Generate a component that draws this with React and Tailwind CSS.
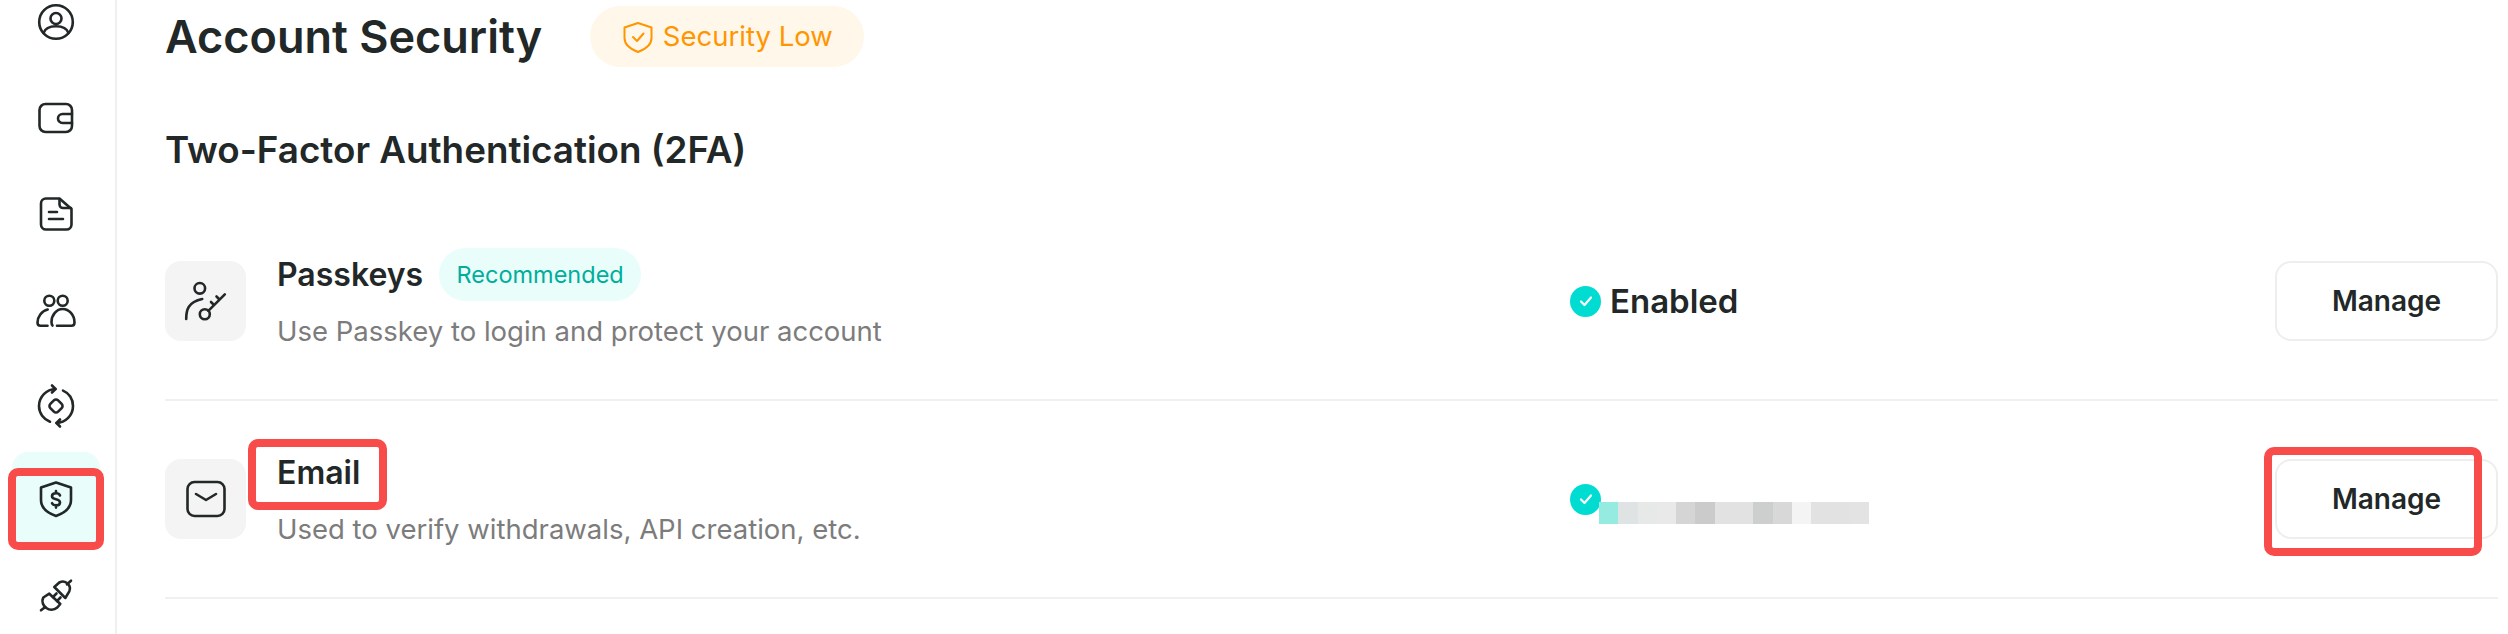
import React from 'react';

const Ico = ({ children, size = 40, sw = 2.6 }) => (
  <svg className="overflow-visible" width={size} height={size} viewBox={`0 0 ${size} ${size}`} fill="none" stroke="currentColor" strokeWidth={sw} strokeLinecap="round" strokeLinejoin="round">
    {children}
  </svg>
);

const UserIcon = () => (
  <Ico>
    <circle cx="20" cy="20" r="16.8" />
    <circle cx="20" cy="16.5" r="5.5" />
    <path d="M7.5 31c1.5-4.5 6.5-6.8 12.5-6.8S31 26.5 32.5 31" />
  </Ico>
);
const WalletIcon = () => (
  <Ico>
    <path d="M9.5 6H30a6 6 0 0 1 6 6v16a6 6 0 0 1-6 6H9.5a6 6 0 0 1-6-6V12a6 6 0 0 1 6-6z" />
    <path d="M36 16h-9.5a4.5 4.5 0 0 0 0 9H36" />
  </Ico>
);
const FileIcon = () => (
  <Ico>
    <path d="M10 4.5h13.5L35.5 15v15.5a5 5 0 0 1-5 5H10a5 5 0 0 1-5-5v-21a5 5 0 0 1 5-5z" />
    <path d="M23.5 5v5.5a3.5 3.5 0 0 0 3.5 3.5h8" />
    <path d="M13 18h8M13 25h14" />
  </Ico>
);
const UsersIcon = () => (
  <Ico>
    <circle cx="13.3" cy="10.7" r="5" />
    <circle cx="26.7" cy="10.7" r="5" />
    <path d="M11.7 19.5C5.5 21 1.5 27 1.5 32.5c0 2 1 3.2 3 3.2h7" />
    <path d="M21 35.7h14.5c2 0 3-1.2 3-3.2C38.500 25 33 19 26.7 19c-6.200 0-11.200 6-11.200 13 0 1.500.3 2.700 1 3.500" />
  </Ico>
);
const SyncIcon = () => (
  <Ico>
    <path d="M14 35.7C7.7 33.3 3 27.2 3 20 3 10.7 10.5 3.2 19.500 3" />
    <path d="M16 -.5l3.500 3.500-3.500 3.500" />
    <path d="M27 4.600C33 7 37 13 37 20c0 9.300-7.500 16.800-16.500 17" />
    <path d="M24 33.500l-3.500 3.500 3.500 3.500" />
    <rect x="14.5" y="14.5" width="11" height="11" rx="3" transform="rotate(45 20 20)" />
  </Ico>
);
const ShieldDollar = () => (
  <Ico>
    <path d="M20 3.500 35 8.500v12.500c0 8-6.500 13-15 16-8.500-3-15-8-15-16V8.500z" />
    <path d="M24 16.500c-.5-1.400-2-2.200-4-2.200-2.300 0-4 1.100-4 2.900s1.600 2.500 4 3c2.400.6 4 1.400 4 3.200s-1.700 2.900-4 2.900c-2 0-3.500-.8-4-2.200M20 12v2.300M20 26.300v2.300" />
  </Ico>
);
const PlugIcon = () => (
  <Ico>
    <path d="M5 35.300l4.300-3.300" />
    <path d="M35 5.700l-4 3.600" />
    <path d="M13.300 18.700 24.300 29l-3 3.500c-3.500 3-8 2.600-11 .500s-5.200-6.500-3-10.500z" />
    <path d="M18.300 12l5-4.500c3-1.500 6.500-.8 8.400 1.200 2 2 2.800 5 1.600 7.600L29.300 23z" />
    <path d="M17 22l3.500-3.500M21 26l3.500-3.500" />
  </Ico>
);
const PasskeyIcon = () => (
  <Ico size={44}>
    <circle cx="15.800" cy="9.300" r="5.300" />
    <path d="M2.200 40c0-9 1.800-17 16-20" />
    <circle cx="20.800" cy="35.300" r="5" />
    <path d="M24.300 31.800 40.800 15.300M30 26l-3-3M35.500 20.500l-3-3" />
  </Ico>
);
const MailIcon = () => (
  <Ico size={44}>
    <rect x="3.500" y="5" width="37" height="34" rx="7" />
    <path d="M12 17l10 6 10-6" />
  </Ico>
);

const CheckBadge = () => (
  <span className="flex h-[31px] w-[31px] shrink-0 items-center justify-center rounded-full bg-[#00dcd2]">
    <svg width="16" height="16" viewBox="0 0 16 16" fill="none" stroke="white" strokeWidth="2.2" strokeLinecap="round" strokeLinejoin="round">
      <path d="M3 8.500l3.500 3.500 6.500-7.500" />
    </svg>
  </span>
);

const blurCells = ['bg-[#96ebe1]', 'bg-[#e0e3e3]', 'bg-[#e7e8e8]', 'bg-[#e9e9e9]', 'bg-[#d5d5d5]', 'bg-[#cbcbcb]', 'bg-[#e2e2e2]', 'bg-[#e2e2e2]', 'bg-[#cdcfce]', 'bg-[#d8d8d8]', 'bg-[#f4f4f4]', 'bg-[#e2e2e2]', 'bg-[#e2e2e2]', 'bg-[#e3e3e3]'];

const RedBox = ({ className }) => (
  <span className={`pointer-events-none absolute rounded-[10px] border-[8px] border-[#f84c4a] ${className}`} />
);

const ManageButton = ({ marked }) => (
  <div className="relative shrink-0">
    <button className="h-[80px] w-[223px] rounded-[16px] border-2 border-[#eeeeee] bg-white text-[28px] font-semibold text-[#222727]">
      Manage
    </button>
    {marked && <RedBox className="-left-[11px] -top-[12px] h-[109px] w-[218px]" />}
  </div>
);

const Row = ({ icon, title, badge, desc, status, marked }) => (
  <div className="flex h-[198px] items-center border-b-2 border-[#f0f0f0]">
    <div className="flex h-[80px] w-[81px] shrink-0 items-center justify-center rounded-[16px] bg-[#f4f4f4] text-[#222727]">{icon}</div>
    <div className="ml-[31px] w-[1293px] shrink-0 pb-[6px]">
      <div className="flex h-[53px] items-center">
        <span className="relative text-[32px] font-semibold leading-none text-[#222727]">
          {title}
          {marked && <RedBox className="-left-[29px] -top-[18px] h-[71px] w-[139px]" />}
        </span>
        {badge && (
          <span className="ml-[16px] flex h-[53px] w-[202px] items-center justify-center rounded-full bg-[#e9fdfb] text-[23.5px] text-[#00ae9c]">{badge}</span>
        )}
      </div>
      <p className="mt-[13px] text-[27.5px] leading-[34px] text-[#7c7c7c]">{desc}</p>
    </div>
    <div className="flex-1">{status}</div>
    <ManageButton marked={marked} />
  </div>
);

export default function App() {
  return (
    <div className="flex h-[634px] w-[2508px] overflow-hidden bg-white font-['Inter',sans-serif] text-[#222727]">
      <aside className="flex w-[117px] shrink-0 flex-col items-center border-r-2 border-[#f0f0f0] pr-[3px] pt-[2px]">
        <div className="flex h-[96px] w-[88px] items-start justify-center"><UserIcon /></div>
        <div className="flex h-[96px] w-[88px] items-start justify-center"><WalletIcon /></div>
        <div className="flex h-[96px] w-[88px] items-start justify-center"><FileIcon /></div>
        <div className="flex h-[96px] w-[88px] items-start justify-center"><UsersIcon /></div>
        <div className="flex h-[66px] w-[88px] items-start justify-center"><SyncIcon /></div>
        <div className="relative flex h-[94px] w-[88px] items-center justify-center rounded-[16px] bg-[#e9fdfb]">
          <ShieldDollar />
          <RedBox className="-left-[4px] top-[16px] h-[82px] w-[96px]" />
        </div>
        <div className="mt-[29px] flex w-[88px] justify-center"><PlugIcon /></div>
      </aside>

      <main className="flex-1 pl-[48px] pr-[10px]">
        <div className="flex h-[73px] items-center">
          <h1 className="text-[45px] font-semibold text-[#222727]">Account Security</h1>
          <span className="ml-[48px] flex h-[61px] w-[274px] items-center justify-center gap-[9px] rounded-full bg-[#fff7e9] text-[27.5px] text-[#ff9500]">
            <Ico size={32} sw={2}>
              <path d="M16 2 29.500 6.500v10.500c0 6.500-5.500 11-13.500 14-8-3-13.500-7.500-13.500-14V6.500z" />
              <path d="M11 16l4 4 6.500-7.500" />
            </Ico>
            Security Low
          </span>
        </div>
        <h2 className="mt-[55px] text-[36.8px] font-semibold leading-[44px] text-[#222727]">Two-Factor Authentication (2FA)</h2>
        <div className="mt-[31px]">
          <Row
            icon={<PasskeyIcon />}
            title="Passkeys"
            badge="Recommended"
            desc="Use Passkey to login and protect your account"
            status={
              <div className="flex items-center gap-[9px]">
                <CheckBadge />
                <span className="text-[33px] font-semibold leading-none text-[#222727]">Enabled</span>
              </div>
            }
          />
          <Row
            marked
            icon={<MailIcon />}
            title="Email"
            desc="Used to verify withdrawals, API creation, etc."
            status={
              <div className="relative">
                <CheckBadge />
                <div className="absolute left-[29px] top-[18px] flex h-[22px]">
                  {blurCells.map((c, i) => (
                    <span key={i} className={`h-full w-[19.3px] ${c}`} />
                  ))}
                </div>
              </div>
            }
          />
        </div>
      </main>
    </div>
  );
}
